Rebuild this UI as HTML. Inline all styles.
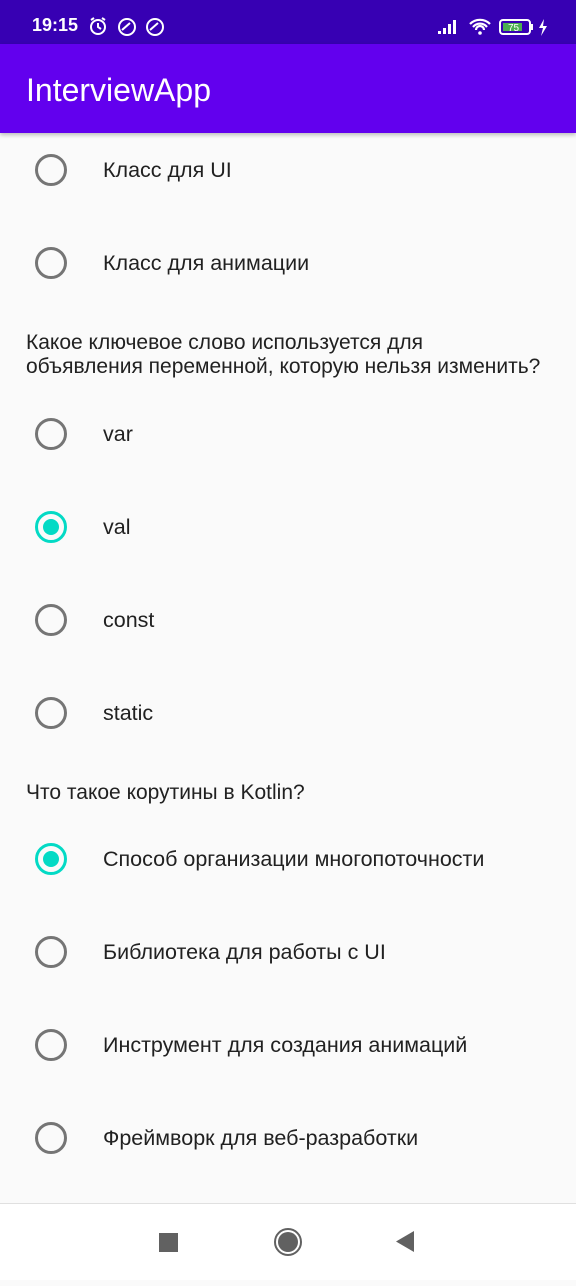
<!DOCTYPE html>
<html><head><meta charset="utf-8"><style>
*{margin:0;padding:0;box-sizing:border-box}
body{width:576px;height:1280px;background:#fafafa;font-family:"Liberation Sans","DejaVu Sans",sans-serif;position:relative;overflow:hidden;color:#212121}
.sb{position:absolute;left:0;top:0;width:576px;height:44px;background:#3700b3;color:#fff}
.ab{position:absolute;left:0;top:44px;width:576px;height:89px;background:#6200ee;box-shadow:0 2px 4px rgba(0,0,0,.25)}
.ab span{position:absolute;left:26px;top:28px;font-size:32px;color:#fff}
.r{position:absolute;left:35px;width:32px;height:32px;border:3px solid #757575;border-radius:50%}
.r.on{border-color:#03dac5}
.r.on::after{content:"";position:absolute;left:5px;top:5px;width:16px;height:16px;border-radius:50%;background:#03dac5}
.t{position:absolute;left:103px;font-size:21.5px;line-height:24px}
.q{position:absolute;left:26px;font-size:21px;line-height:24px}
.nav{position:absolute;left:0;top:1203px;width:576px;height:77px;background:#fff;border-top:1px solid #e0e0e0}
</style></head><body>
<div class="sb">
<span style="position:absolute;left:32px;top:15px;font-size:18px;font-weight:bold">19:15</span>
<svg style="position:absolute;left:86px;top:14px" width="80" height="24" viewBox="0 0 80 24">
<g fill="none" stroke="#fff" stroke-width="2"><circle cx="12" cy="13" r="7"/><path d="M12 9v4l3 2M5 6l3-2M19 6l-3-2"/>
<circle cx="41" cy="13" r="8"/><path d="M36 16l8-7"/><circle cx="69" cy="13" r="8"/><path d="M64 16l8-7"/></g></svg>
<svg style="position:absolute;left:436px;top:16px" width="120" height="22" viewBox="0 0 120 22">
<g fill="#fff"><rect x="2" y="15" width="3" height="3"/><rect x="7" y="12" width="3" height="6"/><rect x="12" y="8" width="3" height="10"/><rect x="17" y="4" width="3" height="14"/></g>
<g fill="none" stroke="#fff" stroke-width="2.2"><path d="M34 8a14 14 0 0 1 20 0M37 11a9 9 0 0 1 14 0M40 14a4 4 0 0 1 8 0"/></g><circle cx="44" cy="17" r="1.8" fill="#fff"/>
<rect x="64" y="4" width="30" height="14" rx="3" fill="none" stroke="#fff" stroke-width="2"/><rect x="67" y="7" width="19" height="8" fill="#4caf50"/><rect x="95" y="8" width="2" height="6" fill="#fff"/>
<text x="72" y="15" font-size="10" fill="#fff" font-family="Liberation Sans">75</text>
<path d="M108 3l-5 9h4l-2 8 6-10h-4z" fill="#fff"/></svg>
</div>
<div class="ab"><span>InterviewApp</span></div>

<div class="r" style="top:154px"></div><div class="t" style="top:158px">Класс для UI</div>
<div class="r" style="top:247px"></div><div class="t" style="top:251px">Класс для анимации</div>
<div class="q" style="top:331px">Какое ключевое слово используется для<br>объявления переменной, которую нельзя изменить?</div>
<div class="r" style="top:418px"></div><div class="t" style="top:422px">var</div>
<div class="r on" style="top:511px"></div><div class="t" style="top:515px">val</div>
<div class="r" style="top:604px"></div><div class="t" style="top:608px">const</div>
<div class="r" style="top:697px"></div><div class="t" style="top:701px">static</div>
<div class="q" style="top:781px">Что такое корутины в Kotlin?</div>
<div class="r on" style="top:843px"></div><div class="t" style="top:847px">Способ организации многопоточности</div>
<div class="r" style="top:936px"></div><div class="t" style="top:940px">Библиотека для работы с UI</div>
<div class="r" style="top:1029px"></div><div class="t" style="top:1033px">Инструмент для создания анимаций</div>
<div class="r" style="top:1122px"></div><div class="t" style="top:1126px">Фреймворк для веб-разработки</div>

<div class="nav">
<svg width="576" height="77" viewBox="0 0 576 77">
<rect x="159" y="29" width="19" height="19" fill="#616161"/>
<circle cx="288" cy="38" r="13" fill="none" stroke="#616161" stroke-width="2"/><circle cx="288" cy="38" r="10" fill="#616161"/>
<path d="M414 27v21l-18-10.5z" fill="#616161"/>
</svg></div>
</body></html>
